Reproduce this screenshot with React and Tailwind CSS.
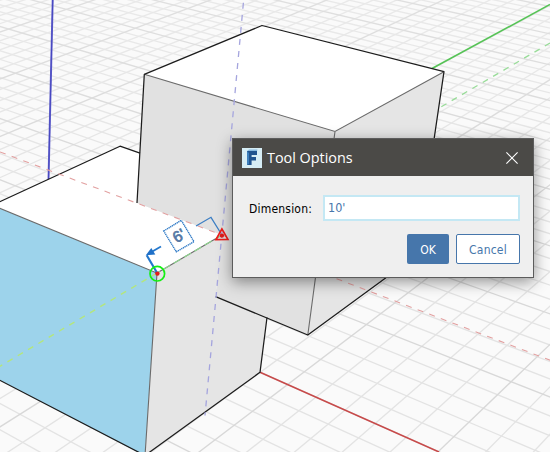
const project = (X, Y) => {
  const w = 1 - 0.0132 * X + 0.0138 * Y;
  return [(46 + 20.37 * X + 18.73 * Y) / w, (277 + 5.676 * X - 5.934 * Y) / w];
};

const range = (a, b) => Array.from({ length: b - a + 1 }, (_, i) => a + i);

function GridLine({ from, to, major }) {
  const [x1, y1] = project(...from);
  const [x2, y2] = project(...to);
  return <line x1={x1} y1={y1} x2={x2} y2={y2} stroke={major ? "url(#major)" : "url(#minor)"} strokeWidth="1.35" />;
}

function Grid() {
  const lines = [];
  range(-35, 30).forEach((k) => lines.push({ id: "x" + k, from: [k, -20], to: [k, 70], major: k % 5 === 0 }));
  range(-20, 70).forEach((k) => lines.push({ id: "y" + k, from: [-35, k], to: [30, k], major: k % 5 === 0 }));
  lines.sort((a, b) => a.major - b.major);
  return (
    <g>
      <defs>
        <linearGradient id="minor" gradientUnits="userSpaceOnUse" x1="0" y1="0" x2="0" y2="260">
          <stop offset="0" stopColor="#e9e9e9" />
          <stop offset="1" stopColor="#e3e3e3" />
        </linearGradient>
        <linearGradient id="major" gradientUnits="userSpaceOnUse" x1="0" y1="0" x2="0" y2="260">
          <stop offset="0" stopColor="#dfdfdf" />
          <stop offset="1" stopColor="#d8d8d8" />
        </linearGradient>
      </defs>
      {lines.map(({ id, ...l }) => (
        <GridLine key={id} {...l} />
      ))}
    </g>
  );
}

function Scene() {
  return (
    <svg viewBox="0 0 550 452" className="block h-full w-full" fill="none">
      <Grid />
      <path d="M52.7 0L48.5 180" stroke="#6a6ace" strokeWidth="2" />
      <path d="M52.7 0L48.5 180" stroke="#3c3cbc" strokeWidth="0.8" />
      <path d="M550 4.5L432 68.5" stroke="#55c455" strokeWidth="1.5" />
      <path d="M260 372.3L439 452" stroke="#c84a4a" strokeWidth="1.5" />

      <path d="M-2 202.6L120 146.2L140 153L137 203L222 235L157 273L-2 208Z" fill="#fff" />
      <path d="M-2 207.6L157 273L145 456L-2 379.3Z" fill="#9dd3eb" />
      <path d="M157 273L222 235L215.6 297L267 317L260 372.3L145 455.5Z" fill="#e5e5e5" />
      <path d="M144.3 74.3L262 25.5L444 71.7L335 131.5Z" fill="#fff" />
      <path d="M144.3 74.3L335 131.5L307.8 335L215.6 296.7L222 235L137 203Z" fill="#e1e1e1" />
      <path d="M335 131.5L444 71.7L417 255L307.8 335Z" fill="#e5e5e5" />

      <g stroke="#6b6b6b" strokeWidth="1.1">
        <path d="M144.3 74.3L335 131.5L444 71.7M335 131.5L307.8 335" />
        <path d="M-2 207.6L157 273L145 456M157 273L222 235" />
      </g>
      <g stroke="#1c1c1c" strokeWidth="1.25" strokeLinejoin="round">
        <path d="M137 203L144.3 74.3L262 25.5L444 71.7L417 255L307.8 335L215.6 296.7" />
        <path d="M-2 202.6L120 146.2L140 153.2M267 317.5L260 372.3L145 455.5L-2 379.3" />
      </g>

      <path d="M243.4 2.8L205 415.5" stroke="#a5a5de" strokeWidth="1.3" strokeDasharray="6 6.1" />
      <path d="M0 152L222 235L550 360.2" stroke="#e2a0a0" strokeWidth="1.1" strokeDasharray="6 6.4" />
      <path d="M550 43L440 107.5" stroke="#98dc98" strokeWidth="1.3" strokeDasharray="6 6" />
      <path d="M222 235L157 273" stroke="#8fd68f" strokeWidth="1.2" strokeDasharray="8 4" />
      <path d="M157 273L0 366.3" stroke="#b4e67c" strokeWidth="1.4" strokeDasharray="6 6" />

      <path d="M157.3 273.3L146.7 255.3" stroke="#2478cc" strokeWidth="2.2" />
      <path d="M161 246.5L151 252.3" stroke="#2478cc" strokeWidth="1.8" />
      <path d="M145.8 255.2L151.3 248L155.3 254.6Z" fill="#1f70c8" />
      <path d="M196 226L211 217.3L221 233.5" stroke="#3d7fc4" strokeWidth="1.3" />
      <path d="M163.7 231L181.3 220.3L194 241.7L176.3 251.8Z" fill="#fff" stroke="#2f7ac6" strokeWidth="1.4" strokeDasharray="1.3 0.6" />
      <text x="179.1" y="241" transform="rotate(-30 179 236)" textAnchor="middle" fontSize="15.5" fill="#5578a4" stroke="#5578a4" strokeWidth="0.7" className="font-['Liberation_Sans',sans-serif]">6'</text>
      <circle cx="157.3" cy="273.7" r="7.3" stroke="#14ef14" strokeWidth="1.7" />
      <circle cx="157.4" cy="273.6" r="2.2" fill="#e01b1b" />
      <path d="M221.9 229L227.9 239.4L215.9 239.6Z" stroke="#ee1c1c" strokeWidth="1.7" />
      <circle cx="221.9" cy="235.6" r="2.2" fill="#e01b1b" />
    </svg>
  );
}

function AppIcon() {
  return (
    <svg viewBox="0 0 20 20" className="size-5 shrink-0">
      <path d="M0 0H20V20H0Z" fill="#d6edf5" />
      <path d="M5 3L7 1.6H15.5L15 3Z" fill="#88badf" />
      <path d="M5 3H15V7H9.6V9H14V12.6H9.6V17H5Z" fill="#20548f" />
      <path d="M5 3L7 5V16L5 17Z" fill="#3d80bd" />
    </svg>
  );
}

function ToolOptions() {
  return (
    <section className="absolute left-[232px] top-[138px] flex h-[140px] w-[302px] flex-col border border-[#5c5c5c] bg-[#efefef] shadow-[0_4px_14px_rgba(0,0,0,0.42)]">
      <header className="flex h-[37px] shrink-0 items-center bg-[#4b4a47] pl-[9px] pr-[15px]">
        <AppIcon />
        <h1 className="ml-[5px] font-['Open_Sans',sans-serif] text-[14.4px] leading-5 text-white">Tool Options</h1>
        <svg viewBox="0 0 12 12" className="ml-auto size-3">
          <path d="M0.4 0.4L11.6 11.6M11.6 0.4L0.4 11.6" stroke="#fff" strokeWidth="1.1" />
        </svg>
      </header>
      <div className="flex items-center pl-4 pr-[13px] pt-[19px] font-['DejaVu_Sans_Condensed','DejaVu_Sans',sans-serif] text-[12px]">
        <label className="w-[74px] whitespace-nowrap pt-0.5 tracking-[0.2px] text-black">Dimension:</label>
        <div className="flex h-[26px] flex-1 items-center border-2 border-[#c4e8f4] bg-white pl-[3px] pt-px text-[12.5px] text-[#4876ab]">10'</div>
      </div>
      <div className="mt-[13px] flex justify-end gap-[7px] pr-[13px] font-['DejaVu_Sans_Condensed','DejaVu_Sans',sans-serif] text-[12px]">
        <button className="h-[30px] w-[42px] rounded-[2px] bg-[#4676ab] pt-px text-white">OK</button>
        <button className="h-[30px] w-16 rounded-[2px] border border-[#4676ab] bg-white pt-px tracking-[0.2px] text-[#4676ab]">Cancel</button>
      </div>
    </section>
  );
}

export default function App() {
  return (
    <main className="relative h-[452px] w-[550px] overflow-hidden bg-[#fafafa]">
      <Scene />
      <ToolOptions />
    </main>
  );
}
